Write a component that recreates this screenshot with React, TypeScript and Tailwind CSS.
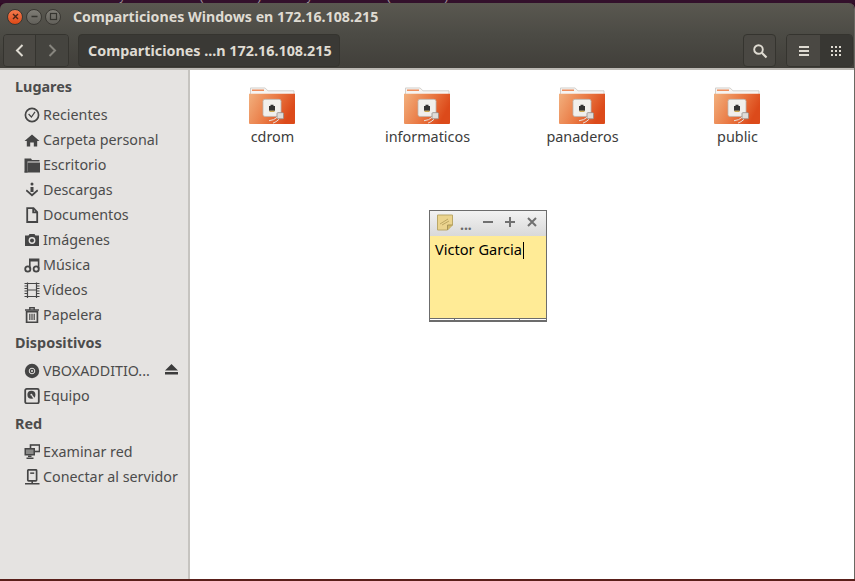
import React from "react";

const ic = "#454545";

const icons: Record<string, React.ReactNode> = {
  clock: (
    <>
      <circle cx="8" cy="8" r="6.6" fill="none" stroke={ic} strokeWidth="1.7" />
      <path d="M4.6 7 L7.4 10 L11 4.8" fill="none" stroke={ic} strokeWidth="1.2" />
    </>
  ),
  home: <path d="M8 2.5 L15.5 9 H13.2 V14.5 H9.8 V10.5 H6.2 V14.5 H2.8 V9 H0.5 Z" fill={ic} />,
  desk: (
    <>
      <path d="M0.5 1.5 H7 L8 3 H15.5 V4.5 H3.5 V15.5 H0.5 Z" fill={ic} />
      <path d="M3.5 5.5 H16 V15.5 H0.5 V14.5 H3.5 Z" fill={ic} />
    </>
  ),
  down: (
    <>
      <circle cx="8" cy="2" r="1.5" fill={ic} />
      <path d="M6.5 5 H9.5 V10 H6.5 Z" fill={ic} />
      <path d="M2.8 7.6 L8 12 L13.2 7.6 L14.2 9 L8 14.6 L1.8 9 Z" fill={ic} />
    </>
  ),
  doc: <path d="M3.2 1.2 H9.5 L13.2 5 V15 H3.2 Z M9.2 2 V5.4 H12.6" fill="none" stroke={ic} strokeWidth="1.8" />,
  cam: (
    <>
      <path d="M1 3.5 H4.5 L5.5 2 H10.5 L11.5 3.5 H15 V14 H1 Z" fill={ic} />
      <circle cx="8" cy="8.5" r="3.4" fill="#e5e3e1" />
      <circle cx="8" cy="8.5" r="2" fill={ic} />
    </>
  ),
  music: (
    <>
      <path d="M5.8 11.5 V2.2 H14.6 V11.5 M5.8 3.6 H14.6" fill="none" stroke={ic} strokeWidth="1.6" />
      <circle cx="3.8" cy="12" r="2.6" fill="none" stroke={ic} strokeWidth="1.8" />
      <circle cx="12.2" cy="12" r="2.6" fill="none" stroke={ic} strokeWidth="1.8" />
    </>
  ),
  film: (
    <path
      d="M3.5 0.5 V16 M12.5 0.5 V16 M3.5 8 H12.5 M0.5 1.5 H3.5 M0.5 4 H3.5 M0.5 6.5 H3.5 M0.5 9 H3.5 M0.5 11.5 H3.5 M0.5 14.5 H3.5 M12.5 1.5 H15.5 M12.5 4 H15.5 M12.5 6.5 H15.5 M12.5 9 H15.5 M12.5 11.5 H15.5 M12.5 14.5 H15.5 M3.5 1.5 H12.5 M3.5 14.5 H12.5"
      fill="none"
      stroke={ic}
      strokeWidth="1.2"
    />
  ),
  trash: (
    <>
      <path d="M1 3 H15 M5.8 2.6 V0.8 H10.2 V2.6" fill="none" stroke={ic} strokeWidth="1.4" />
      <path d="M2.6 4.6 H13.4 V15.4 H2.6 Z" fill="none" stroke={ic} strokeWidth="1.7" />
      <path d="M5.8 6.8 V13 M8 6.8 V13 M10.2 6.8 V13" stroke={ic} strokeWidth="1.2" />
    </>
  ),
  disc: (
    <>
      <circle cx="8" cy="8" r="7.2" fill={ic} />
      <circle cx="8" cy="8" r="2.8" fill="none" stroke="#e5e3e1" strokeWidth="1" />
      <circle cx="8" cy="8" r="1" fill="#e5e3e1" />
    </>
  ),
  hdd: (
    <>
      <rect x="1.2" y="0.9" width="13.6" height="14.4" rx="1.5" fill="none" stroke={ic} strokeWidth="1.8" />
      <circle cx="7.4" cy="6.8" r="4" fill={ic} />
      <path d="M8 7.5 L11.8 12.8" stroke="#e5e3e1" strokeWidth="1.3" />
      <circle cx="7.4" cy="6.8" r="1" fill="#e5e3e1" />
    </>
  ),
  net: (
    <>
      <rect x="6.5" y="1" width="9" height="6.5" fill="none" stroke={ic} strokeWidth="1.6" />
      <rect x="0.5" y="4" width="10.5" height="7.5" fill={ic} />
      <rect x="2" y="5.5" width="7.5" height="4.5" fill="#8a8a88" />
      <path d="M4 11.5 H7.5 V13 H4 Z M2.5 13.5 H9.5 V15 H2.5 Z" fill={ic} />
    </>
  ),
  server: (
    <>
      <rect x="3.8" y="0.8" width="8.8" height="11" rx="0.8" fill="none" stroke={ic} strokeWidth="1.7" />
      <rect x="6.2" y="3.4" width="4" height="1.5" fill={ic} />
      <path d="M1 14.8 H15.5 M8.2 12 V14.8" stroke={ic} strokeWidth="1.6" />
    </>
  ),
};

function Row({ icon, label, eject }: { icon: string; label: string; eject?: boolean }) {
  return (
    <div className="flex h-[25px] items-center pl-[24px]">
      <svg width="16" height="16" viewBox="0 0 16 16" className="mr-[3px] shrink-0">
        {icons[icon]}
      </svg>
      <span className="flex-1 truncate text-[14.3px] text-[#4c4c4c]">{label}</span>
      {eject && (
        <svg width="13" height="11" viewBox="0 0 13 11" className="mb-[2px] mr-[10px] shrink-0">
          <path d="M6.5 0 L13 6.5 H0 Z M0 8 H13 V10.5 H0 Z" fill="#3c3c3c" />
        </svg>
      )}
    </div>
  );
}

function Head({ label }: { label: string }) {
  return <div className="flex h-[24px] items-center pl-[15px] text-[14.4px] font-bold text-[#4c4c4c]">{label}</div>;
}

function Folder({ name }: { name: string }) {
  return (
    <div className="flex w-[155px] flex-col items-center">
      <svg width="46" height="38" viewBox="1 0 46 40" preserveAspectRatio="none" className="mr-[1px] mt-[17px]">
        <defs>
          <linearGradient id="fg" x1="0" y1="0" x2="1" y2="0.35">
            <stop offset="0" stopColor="#f2b07e" />
            <stop offset="0.55" stopColor="#ea7b45" />
            <stop offset="1" stopColor="#dc4a1a" />
          </linearGradient>
        </defs>
        <path d="M2.5 1 H17 L20 4 H46 V12 H2.5 Z" fill="#f6f4f2" stroke="#c9c5c1" strokeWidth="0.8" />
        <rect x="4" y="2.6" width="12" height="1.6" fill="#ee8f5f" />
        <path d="M1 7 H47 V38 Q47 39 46 39 H2 Q1 39 1 38 Z" fill="url(#fg)" />
        <rect x="15" y="13" width="18" height="18" rx="2" fill="#f1efec" stroke="#b9b5b0" strokeWidth="0.8" />
        <path d="M21 25 V20 H22.5 V18.6 H25.5 V20 H27 V25 Z" fill="#333" />
        <rect x="21.5" y="25" width="5" height="1.2" fill="#c7a13c" />
        <rect x="29" y="27" width="6.5" height="6.5" rx="1" fill="#dfdcd8" stroke="#908c88" strokeWidth="0.8" />
        <path d="M29 32 Q26 35 21 35.5 M31 34 Q28 37 25 38" fill="none" stroke="#e9e4df" strokeWidth="1" />
      </svg>
      <span className="mt-[2px] text-[14.4px] leading-[20px] text-[#3c3c3c]">{name}</span>
    </div>
  );
}

function WinBtn({ cls, children }: { cls: string; children: React.ReactNode }) {
  return (
    <div className={`flex h-[16px] w-[16px] items-center justify-center rounded-full border border-[#3a3833] ${cls}`}>
      <svg width="9" height="9" viewBox="0 0 9 9">
        {children}
      </svg>
    </div>
  );
}

export default function App() {
  return (
    <div
      className="flex h-[581px] w-[855px] flex-col overflow-hidden bg-[#300a24] text-[#3c3c3c]"
      style={{ fontFamily: '"Noto Sans", "Open Sans", sans-serif' }}
    >
      {/* Desktop strip with the terminal text peeking out */}
      <div className="h-[3px] overflow-hidden bg-[#33102b] pl-[90px] font-['Liberation_Mono',monospace] text-[12px] leading-[0px] whitespace-pre text-[#9a8c96]">
        <div className="mt-[-3px]">RX bytes:37708 (37.7 KB)  TX bytes:37708 (37.7 KB)</div>
      </div>

      <div className="flex flex-1 flex-col overflow-hidden rounded-t-[6px] border-r border-[#6a6862]">
        {/* Title bar */}
        <div className="flex h-[31px] items-center bg-gradient-to-b from-[#5a5850] to-[#4c4b45] pb-[4px] pl-[7px]">
          <div className="flex gap-[3px]">
            <WinBtn cls="bg-gradient-to-b from-[#f47a4c] to-[#dd4814]">
              <path d="M2 2 L7 7 M7 2 L2 7" stroke="#4a2416" strokeWidth="1.4" />
            </WinBtn>
            <WinBtn cls="bg-gradient-to-b from-[#7f7d76] to-[#62605a]">
              <path d="M1.5 4.5 H7.5" stroke="#35342f" strokeWidth="1.4" />
            </WinBtn>
            <WinBtn cls="bg-gradient-to-b from-[#7f7d76] to-[#62605a]">
              <rect x="1.5" y="1.5" width="6" height="6" fill="none" stroke="#35342f" strokeWidth="1.2" />
            </WinBtn>
          </div>
          <span className="ml-[12px] text-[14.2px] font-bold text-[#dfdbd2]">
            Comparticiones Windows en 172.16.108.215
          </span>
        </div>

        {/* Toolbar */}
        <div className="flex h-[36px] items-start justify-between border-b-2 border-[#bdbab5] bg-gradient-to-b from-[#4c4b45] to-[#413f3a] pl-[3px] pr-[1px]">
          <div className="flex items-start">
            <div className="flex h-[33px] w-[66px] overflow-hidden rounded-[4px] border border-[#35342f]">
              <div className="flex w-[32px] items-center justify-center border-r border-[#35342f] bg-[#4a4843]">
                <svg width="13" height="15" viewBox="0 0 13 15">
                  <path d="M9.5 2 L4 7.5 L9.5 13" fill="none" stroke="#dfdbd2" strokeWidth="2" />
                </svg>
              </div>
              <div className="flex flex-1 items-center justify-center bg-[#45443f]">
                <svg width="13" height="15" viewBox="0 0 13 15">
                  <path d="M3.5 2 L9 7.5 L3.5 13" fill="none" stroke="#87857e" strokeWidth="2" />
                </svg>
              </div>
            </div>
            <div className="ml-[9px] flex h-[33px] w-[262px] items-center whitespace-nowrap rounded-[4px] border border-[#35342f] bg-[#3a3935] pl-[9px] text-[14.35px] font-bold text-[#dfdbd2]">
              Comparticiones ...n 172.16.108.215
            </div>
          </div>
          <div className="flex items-start">
            <div className="flex h-[33px] w-[33px] items-center justify-center rounded-[4px] border border-[#35342f] bg-[#4a4843]">
              <svg width="16" height="16" viewBox="0 0 16 16">
                <circle cx="6.5" cy="6.5" r="4.3" fill="none" stroke="#dfdbd2" strokeWidth="1.9" />
                <path d="M9.8 9.8 L14.5 14.5" stroke="#dfdbd2" strokeWidth="2.2" />
              </svg>
            </div>
            <div className="ml-[10px] flex h-[33px] w-[67px] overflow-hidden rounded-[4px] border border-[#35342f]">
              <div className="flex w-[33px] items-center justify-center bg-[#4a4843]">
                <svg width="12" height="12" viewBox="0 0 12 12">
                  <path d="M1 2 H11 M1 6 H11 M1 10 H11" stroke="#dfdbd2" strokeWidth="2" />
                </svg>
              </div>
              <div className="flex flex-1 items-center justify-center bg-[#383733]">
                <svg width="12" height="12" viewBox="0 0 12 12" fill="#dfdbd2">
                  <rect x="1" y="1" width="2" height="2" />
                  <rect x="5" y="1" width="2" height="2" />
                  <rect x="9" y="1" width="2" height="2" />
                  <rect x="1" y="5" width="2" height="2" />
                  <rect x="5" y="5" width="2" height="2" />
                  <rect x="9" y="5" width="2" height="2" />
                  <rect x="1" y="9" width="2" height="2" />
                  <rect x="5" y="9" width="2" height="2" />
                  <rect x="9" y="9" width="2" height="2" />
                </svg>
              </div>
            </div>
          </div>
        </div>

        {/* Body */}
        <div className="flex flex-1 overflow-hidden bg-white">
          <aside className="w-[190px] shrink-0 border-r-2 border-[#c6c4c0] bg-[#e5e3e1] pt-[5px]">
            <Head label="Lugares" />
            <div className="mt-[3px]">
              <Row icon="clock" label="Recientes" />
              <Row icon="home" label="Carpeta personal" />
              <Row icon="desk" label="Escritorio" />
              <Row icon="down" label="Descargas" />
              <Row icon="doc" label="Documentos" />
              <Row icon="cam" label="Imágenes" />
              <Row icon="music" label="Música" />
              <Row icon="film" label="Vídeos" />
              <Row icon="trash" label="Papelera" />
            </div>
            <div className="mt-[4px]">
              <Head label="Dispositivos" />
            </div>
            <div className="mt-[3px]">
              <Row icon="disc" label="VBOXADDITIO..." eject />
              <Row icon="hdd" label="Equipo" />
            </div>
            <div className="mt-[4px]">
              <Head label="Red" />
            </div>
            <div className="mt-[3px]">
              <Row icon="net" label="Examinar red" />
              <Row icon="server" label="Conectar al servidor" />
            </div>
          </aside>

          <main className="relative flex-1">
            <div className="flex pl-[5px]">
              <Folder name="cdrom" />
              <Folder name="informaticos" />
              <Folder name="panaderos" />
              <Folder name="public" />
            </div>

            {/* Sticky note floating over the file view */}
            <div className="absolute left-[239px] top-[140px] flex h-[112px] w-[118px] flex-col border border-[#6c6c6c] bg-[#ffeb96]">
              <div className="flex h-[25px] items-center bg-gradient-to-b from-[#f2f2f2] to-[#d9d9d9] pb-[3px] pl-[7px]">
                <svg width="16" height="17" viewBox="0 0 16 17">
                  <path d="M0.5 1 H15.5 V11 L10.5 16 H0.5 Z" fill="#ebd48e" stroke="#bba868" />
                  <path d="M15.5 11 H10.5 V16" fill="#d1b968" stroke="#a89558" />
                  <path d="M3 10 L11 5 M5 11 L12 7" stroke="#b09a58" strokeWidth="0.8" />
                </svg>
                <span className="ml-[7px] mt-[5px] w-[14px] text-[14px] leading-[14px] font-bold text-[#6a6a6a]">...</span>
                <svg width="12" height="12" viewBox="0 0 12 12" className="ml-[8px]">
                  <path d="M1 6 H11" stroke="#707070" strokeWidth="2" />
                </svg>
                <svg width="12" height="12" viewBox="0 0 12 12" className="ml-[10px]">
                  <path d="M1 6 H11 M6 1 V11" stroke="#707070" strokeWidth="2" />
                </svg>
                <svg width="12" height="12" viewBox="0 0 12 12" className="ml-[10px]">
                  <path d="M2 2 L10 10 M10 2 L2 10" stroke="#707070" strokeWidth="2" />
                </svg>
              </div>
              <div className="flex-1 pl-[5px] pt-[3px] text-[14.6px] leading-[20px] text-black">
                <span>Victor Garcia</span>
                <span className="ml-px inline-block h-[17px] w-px bg-black align-[-4px]" />
              </div>
              <div className="flex h-[3px] border-y border-[#6c6c6c] bg-white">
                <div className="w-[25px] border-r border-[#6c6c6c]" />
                <div className="w-[65px] border-r border-[#6c6c6c]" />
              </div>
            </div>
          </main>
        </div>
      </div>
      <div className="h-[2px] bg-[#5a1f1a]" />
    </div>
  );
}
